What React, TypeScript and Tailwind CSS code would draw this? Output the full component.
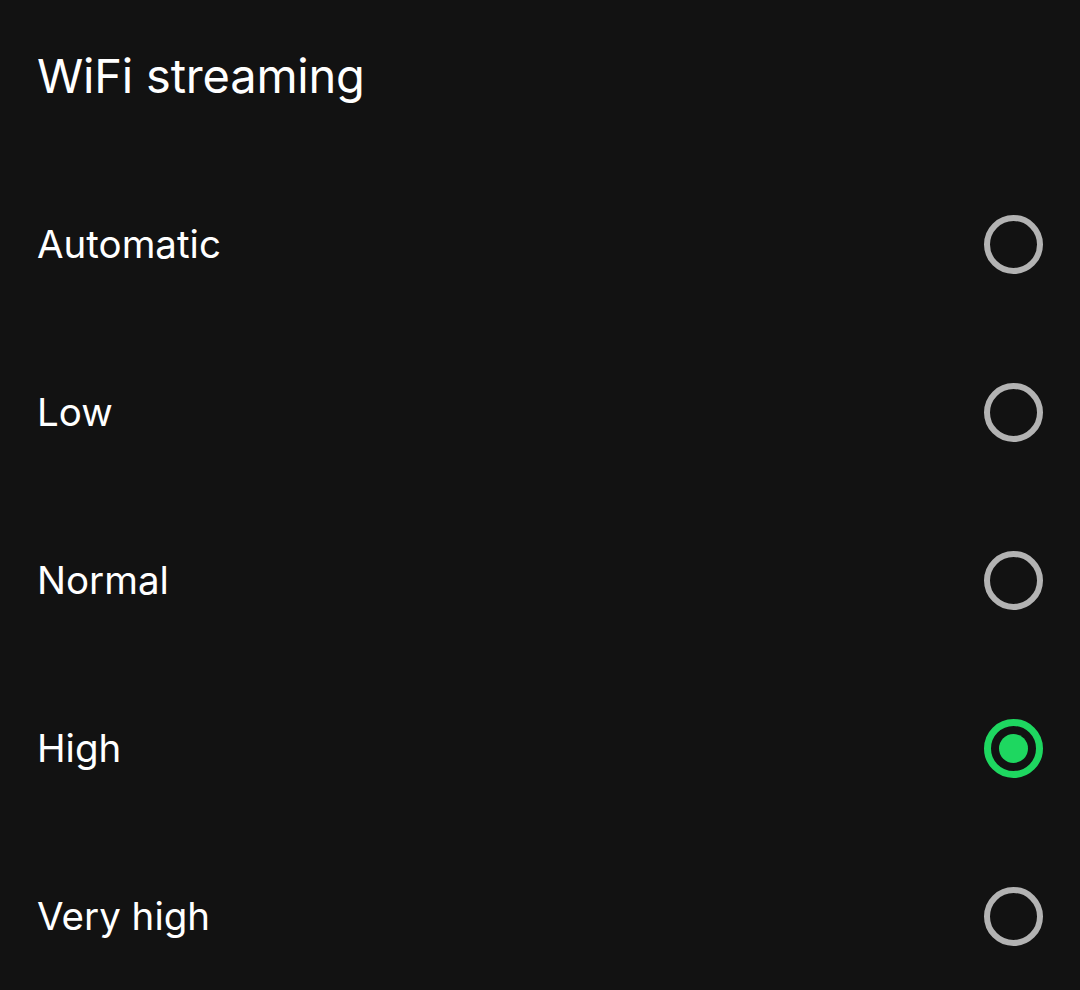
const options = ["Automatic", "Low", "Normal", "High", "Very high"];

const Radio = ({ checked }: { checked: boolean }) =>
  checked ? (
    <div className="flex h-[59px] w-[59px] items-center justify-center rounded-full border-[7px] border-[#1ed760]">
      <div className="h-[29px] w-[29px] rounded-full bg-[#1ed760]" />
    </div>
  ) : (
    <div className="h-[59px] w-[59px] rounded-full border-[6px] border-[#b3b3b3]" />
  );

export default function App() {
  return (
    <div
      className="flex h-[990px] w-full flex-col overflow-hidden bg-[#121212] px-[37px] text-white"
      style={{ fontFamily: "Inter, 'Noto Sans', sans-serif" }}
    >
      {/* TITLE */}
      <div className="flex h-[160px] shrink-0 items-start pt-[47px]">
        <h1 className="text-[47px] leading-[58px] font-normal tracking-[-0.2px]">WiFi streaming</h1>
      </div>

      {/* OPTIONS */}
      {options.map((option) => (
        <div key={option} className="flex h-[168px] shrink-0 items-center justify-between">
          <span className="text-[38.5px] leading-none">{option}</span>
          <Radio checked={option === "High"} />
        </div>
      ))}
    </div>
  );
}
